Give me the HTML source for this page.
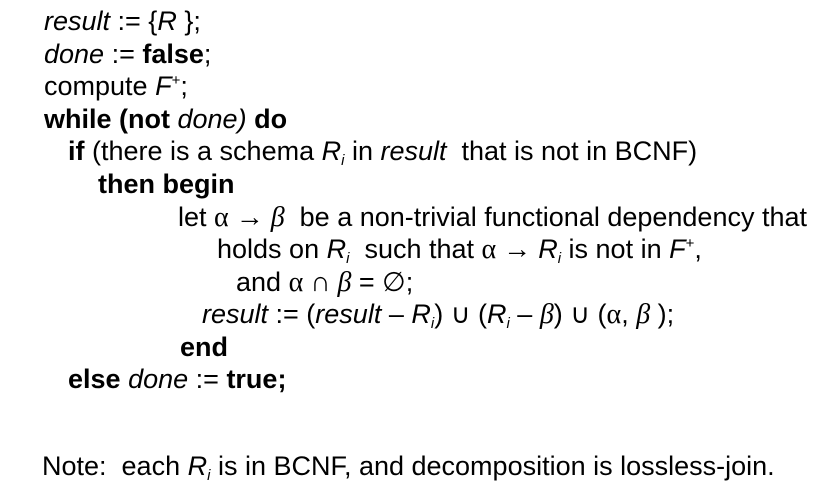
<!DOCTYPE html>
<html><head><meta charset="utf-8"><style>
body{margin:0;width:836px;height:496px;background:#fff;overflow:hidden;font-family:"Liberation Sans",Arial,sans-serif;color:#000;}
.l{position:absolute;font-size:27px;line-height:28px;white-space:nowrap;}
i{font-style:italic}
b{font-weight:bold}
sub{font-size:15px;vertical-align:-5px;line-height:0}
sup{font-size:15px;vertical-align:10px;line-height:0}
.g{font-family:"Liberation Serif",serif;font-size:28px;}
</style></head><body>
<div class="l" style="left:44px;top:7px"><i>result</i> := {<i>R</i> };</div>
<div class="l" style="left:44px;top:40px"><i>done</i> := <b>false</b>;</div>
<div class="l" style="left:44px;top:72px">compute <i>F</i><sup>+</sup>;</div>
<div class="l" style="left:44px;top:105px"><b>while (not</b> <i>done)</i> <b>do</b></div>
<div class="l" style="left:68px;top:137px"><b>if</b> (there is a schema <i>R<sub>i</sub></i> in <i>result</i>&nbsp; that is not in BCNF)</div>
<div class="l" style="left:98px;top:170px"><b>then begin</b></div>
<div class="l" style="left:178px;top:203px">let <span class="g">α → <i>β</i></span>&nbsp; be a non-trivial functional dependency that</div>
<div class="l" style="left:217px;top:235px">holds on <i>R<sub>i</sub></i>&nbsp; such that <span class="g">α → </span><i>R<sub>i</sub></i> is not in <i>F</i><sup>+</sup>,</div>
<div class="l" style="left:236px;top:268px">and <span class="g">α ∩ <i>β</i></span> = ∅;</div>
<div class="l" style="left:202px;top:300px"><i>result</i> := (<i>result</i> – <i>R<sub>i</sub></i>) ∪ (<i>R<sub>i</sub></i> – <i class="g">β</i>) ∪ (<span class="g">α</span>, <i class="g">β</i> );</div>
<div class="l" style="left:180px;top:333px"><b>end</b></div>
<div class="l" style="left:68px;top:365px"><b>else</b> <i>done</i> := <b>true;</b></div>
<div class="l" style="left:42px;top:452px">Note:&nbsp; each <i>R<sub>i</sub></i> is in BCNF, and decomposition is lossless-join.</div>
</body></html>
